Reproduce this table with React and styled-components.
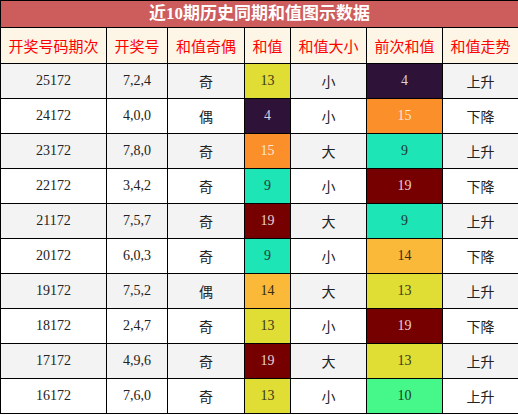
import styled, { createGlobalStyle } from "styled-components";

const GlobalStyle = createGlobalStyle`
  body {
    margin: 0;
    background: #fff;
  }
`;

const rows = [
  ["25172", "7,2,4", "奇", 13, "小", 4, "上升"],
  ["24172", "4,0,0", "偶", 4, "小", 15, "下降"],
  ["23172", "7,8,0", "奇", 15, "大", 9, "上升"],
  ["22172", "3,4,2", "奇", 9, "小", 19, "下降"],
  ["21172", "7,5,7", "奇", 19, "大", 9, "上升"],
  ["20172", "6,0,3", "奇", 9, "小", 14, "下降"],
  ["19172", "7,5,2", "偶", 14, "大", 13, "上升"],
  ["18172", "2,4,7", "奇", 13, "小", 19, "下降"],
  ["17172", "4,9,6", "奇", 19, "大", 13, "上升"],
  ["16172", "7,6,0", "奇", 13, "小", 10, "上升"],
];

// colour for each sum value: [background, text]
const sumColors = {
  4: ["#2e1238", "#d9d0dc"],
  9: ["#1de5b5", "#1d3a33"],
  10: ["#46f78a", "#1d3a26"],
  13: ["#e0dd34", "#3a3818"],
  14: ["#fbb93a", "#3a2c10"],
  15: ["#fb8f2a", "#fbe8d6"],
  19: ["#760000", "#e8d0d0"],
};

const headers = ["开奖号码期次", "开奖号", "和值奇偶", "和值", "和值大小", "前次和值", "和值走势"];
const widths = [106, 61, 77, 46, 76, 76, 76];

const Table = styled.table`
  width: 518px;
  border-collapse: collapse;
  table-layout: fixed;
  font-family: "Liberation Serif", "Noto Sans CJK SC", serif;
`;

const TitleCell = styled.th`
  height: 26px;
  padding: 0;
  background: #cd5c5c;
  color: #fff;
  font-size: 17px;
  font-weight: bold;
  border: 1px solid #000;
  text-align: center;
  line-height: 26px;
`;

const HeadCell = styled.th`
  height: 35px;
  padding: 0;
  background: #fdf5e6;
  color: #ff0000;
  font-family: "Noto Sans CJK SC", sans-serif;
  font-size: 15px;
  font-weight: normal;
  border: 1px solid #000;
  text-align: center;
`;

const Row = styled.tr`
  background: ${(p) => (p.$odd ? "#f3f3f3" : "#fff")};
`;

const Cell = styled.td`
  height: 34px;
  padding: 0;
  border: 1px solid #000;
  text-align: center;
  font-size: 14px;
  color: ${(p) => p.$color || "#222"};
  background: ${(p) => p.$bg || "transparent"};
  font-family: ${(p) =>
    p.$cjk ? `"Noto Sans CJK SC", sans-serif` : `"Liberation Serif", serif`};
`;

const SumCell = ({ value }) => {
  const [bg, fg] = sumColors[value];
  return (
    <Cell $bg={bg} $color={fg}>
      {value}
    </Cell>
  );
};

export default function App() {
  return (
    <>
      <GlobalStyle />
      <Table>
        <colgroup>
          {widths.map((w, i) => (
            <col key={i} style={{ width: w }} />
          ))}
        </colgroup>
        <thead>
          <tr>
            <TitleCell colSpan={7}>近10期历史同期和值图示数据</TitleCell>
          </tr>
          <tr>
            {headers.map((h) => (
              <HeadCell key={h}>{h}</HeadCell>
            ))}
          </tr>
        </thead>
        <tbody>
          {rows.map((r, i) => (
            <Row key={r[0]} $odd={i % 2 === 0}>
              <Cell>{r[0]}</Cell>
              <Cell>{r[1]}</Cell>
              <Cell $cjk>{r[2]}</Cell>
              <SumCell value={r[3]} />
              <Cell $cjk>{r[4]}</Cell>
              <SumCell value={r[5]} />
              <Cell $cjk>{r[6]}</Cell>
            </Row>
          ))}
        </tbody>
      </Table>
    </>
  );
}
